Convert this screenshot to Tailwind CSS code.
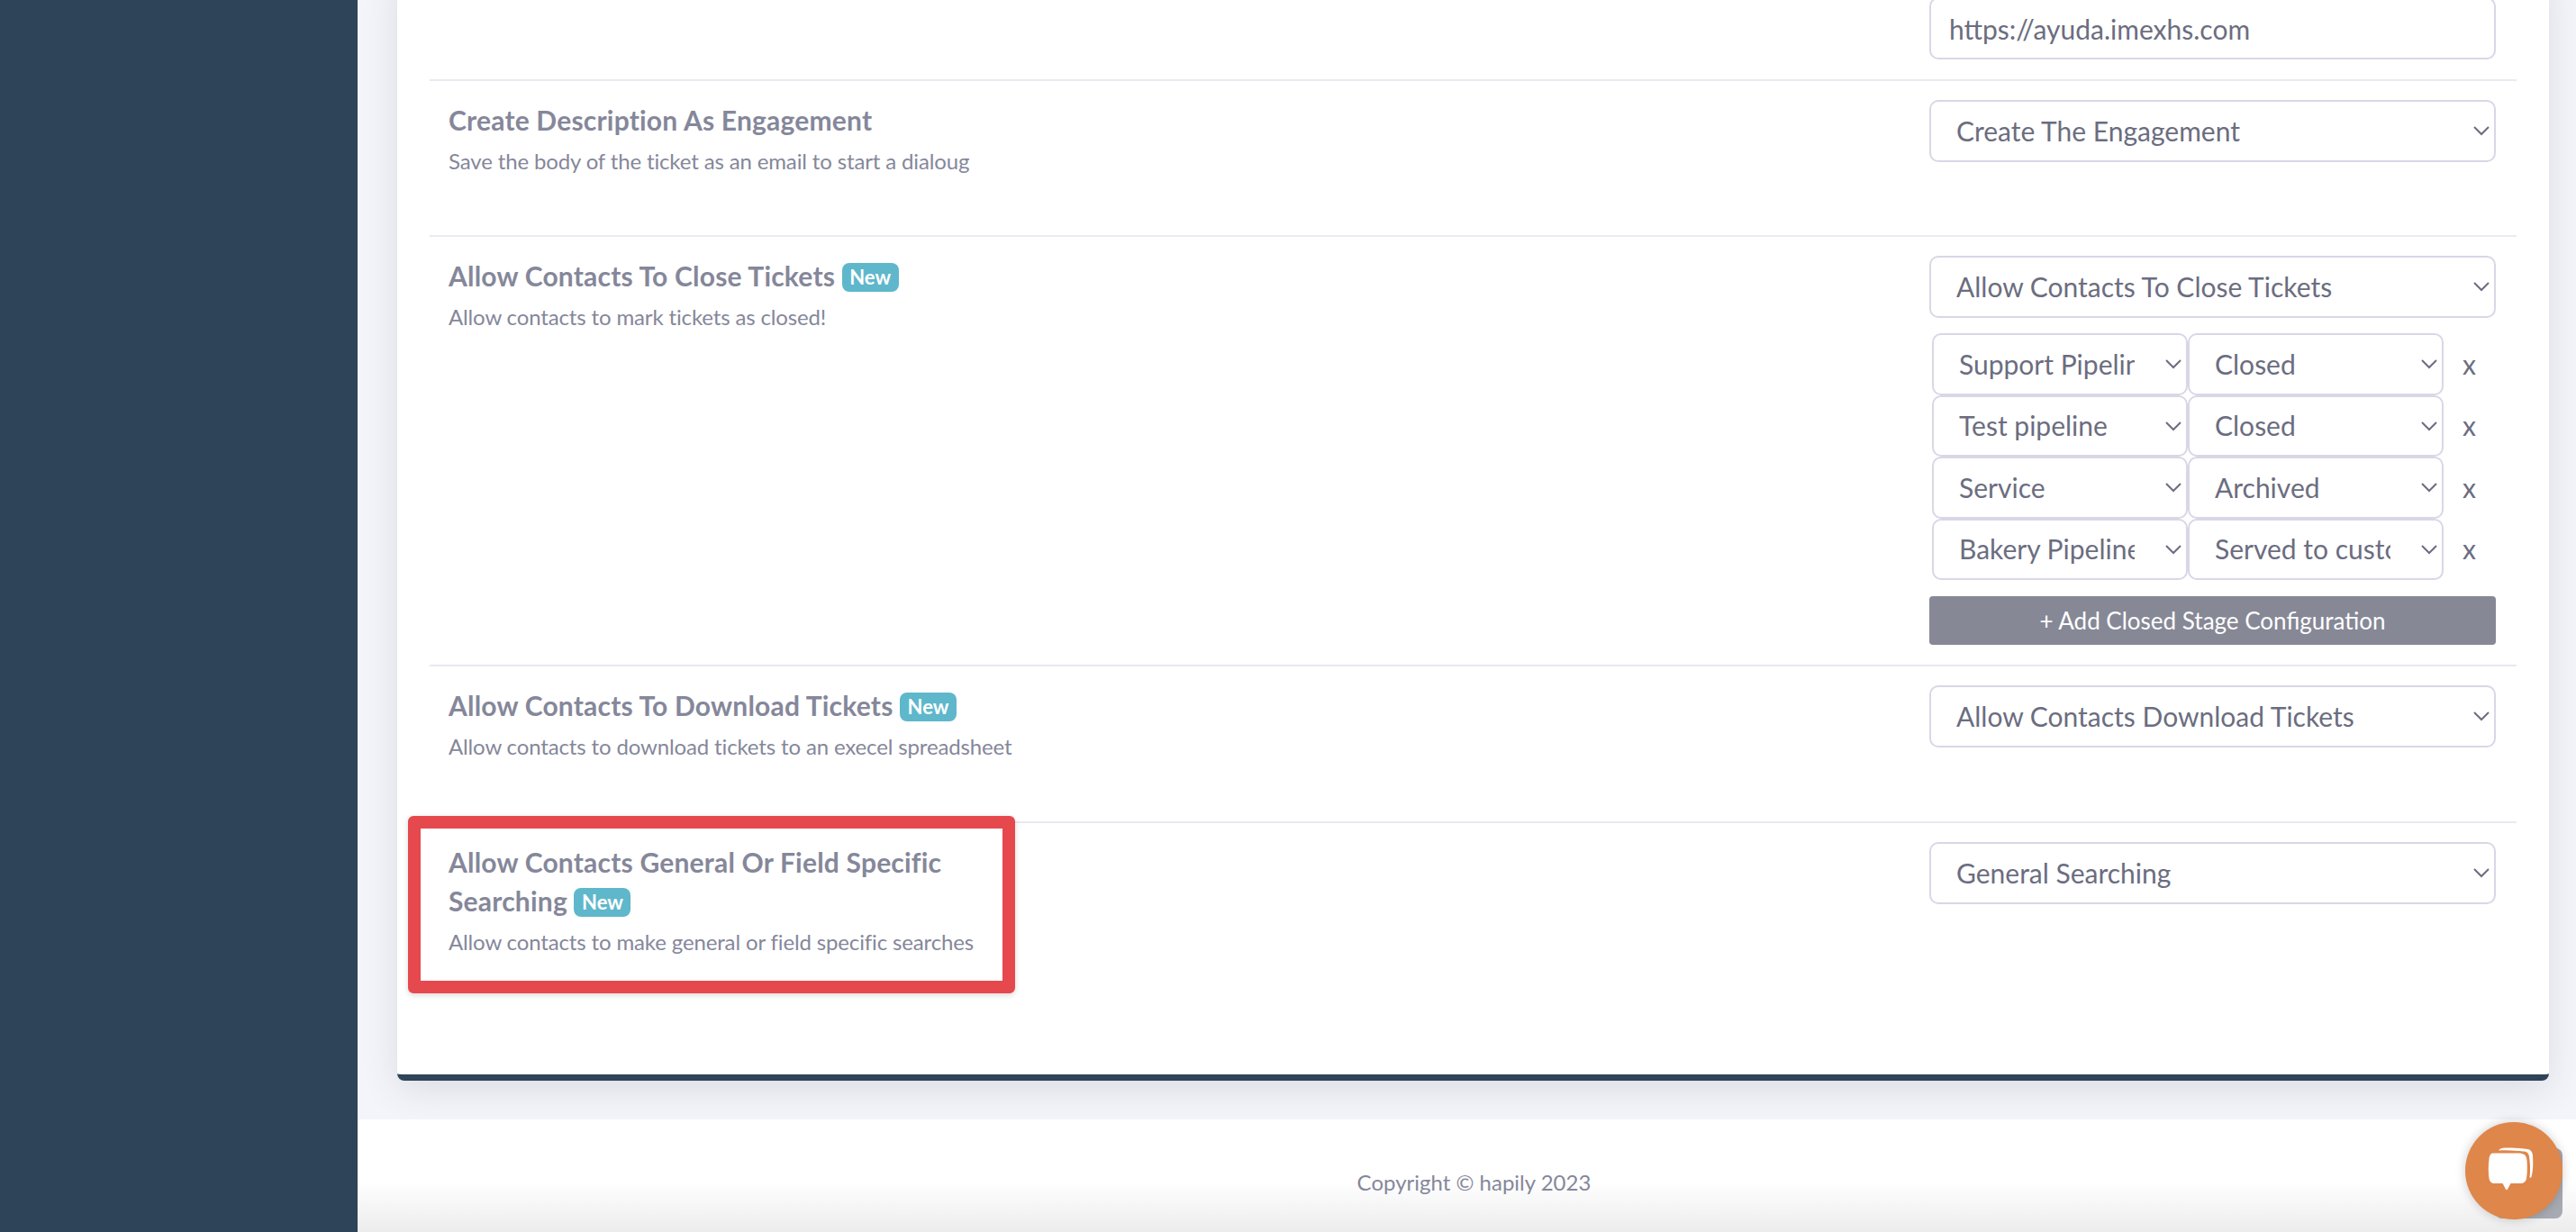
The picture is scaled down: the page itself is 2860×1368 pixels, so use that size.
<!DOCTYPE html>
<html lang="en">
<head>
<meta charset="utf-8">
<title>Settings</title>
<script src="https://cdn.jsdelivr.net/npm/@tailwindcss/browser@4"></script>
</head>
<body class="font-['Lato',sans-serif] overflow-hidden">
<div class="flex h-[1368px] w-[2860px] overflow-hidden">
  <aside class="w-[397px] shrink-0 bg-[#2d4459]"></aside>
  <main class="relative flex-1 flex flex-col min-w-0">
    <div class="h-[1243px] shrink-0 overflow-hidden bg-[#f4f5fa] flex flex-col justify-end pl-[44px] pr-[30px] pb-[43px]">
      <section class="shrink-0 bg-white rounded-[8px] border-b-[7px] border-[#2d4459] shadow-[0_10px_40px_rgba(60,60,80,0.13)] px-[36px] pt-[30px]">
        <!-- Help URL row (scrolled partly out of view) -->
        <div class="flex justify-between border-b-2 border-[#e9e9f1] pl-[21px] pr-[23px] pb-[22px]">
          <div></div>
          <input value="https://ayuda.imexhs.com" class="w-[629px] h-[69px] px-[20px] rounded-[10px] border-2 border-[#d9d7e6] text-[30px] text-[#6b6d80] bg-white outline-none">
        </div>

        <div class="flex justify-between border-b-2 border-[#e9e9f1] pl-[21px] pr-[23px] pt-[21px] h-[173px]">
          <div class="w-[640px]">
            <h3 class="mt-[1px] text-[30px] tracking-[0.2px] leading-[43px] font-bold text-[#85879a]">Create Description As Engagement</h3>
            <p class="text-[24px] tracking-[-0.14px] leading-[36px] mt-[6px] text-[#85879a]">Save the body of the ticket as an email to start a dialoug</p>
          </div>
          <div class="relative w-[629px] h-[69px]">
            <select class="appearance-none w-full h-full pl-[28px] pr-[40px] rounded-[10px] border-2 border-[#d9d7e6] text-[30px] text-[#6b6d80] bg-white"><option>Create The Engagement</option></select>
            <svg class="absolute right-[7px] top-[29px] pointer-events-none" width="18" height="11" viewBox="0 0 18 11" fill="none" stroke="#6b6d80" stroke-width="2"><path d="M1 1l8 8 8-8"/></svg>
          </div>
        </div>

        <div class="flex justify-between border-b-2 border-[#e9e9f1] pl-[21px] pr-[23px] pt-[21px] h-[477px]">
          <div class="w-[640px]">
            <h3 class="mt-[1px] text-[30px] tracking-[0.2px] leading-[43px] font-bold text-[#85879a]">Allow Contacts To Close Tickets <span class="inline-block align-[2px] h-[32px] w-[63px] rounded-[8px] bg-[#5fb7cb] text-white text-[22px] tracking-normal leading-[32px] text-center">New</span></h3>
            <p class="text-[24px] tracking-[-0.14px] leading-[36px] mt-[6px] text-[#85879a]">Allow contacts to mark tickets as closed!</p>
          </div>
          <div class="w-[629px] flex flex-col">
            <div class="relative h-[69px]">
              <select class="appearance-none w-full h-full pl-[28px] pr-[40px] rounded-[10px] border-2 border-[#d9d7e6] text-[30px] text-[#6b6d80] bg-white"><option>Allow Contacts To Close Tickets</option></select>
              <svg class="absolute right-[7px] top-[29px] pointer-events-none" width="18" height="11" viewBox="0 0 18 11" fill="none" stroke="#6b6d80" stroke-width="2"><path d="M1 1l8 8 8-8"/></svg>
            </div>
            <div class="mt-[17px] pl-[3px] flex flex-col">
              <div class="flex items-center h-[68.5px]">
                <div class="relative w-[284px] h-full"><select class="appearance-none w-full h-full pl-[28px] pr-[57px] rounded-[10px] border-2 border-[#d9d7e6] text-[30px] text-[#6b6d80] bg-white"><option>Support Pipeline</option></select><svg class="absolute right-[7px] top-[29px]" width="18" height="11" viewBox="0 0 18 11" fill="none" stroke="#6b6d80" stroke-width="2"><path d="M1 1l8 8 8-8"/></svg></div>
                <div class="relative w-[284px] h-full"><select class="appearance-none w-full h-full pl-[28px] pr-[57px] rounded-[10px] border-2 border-[#d9d7e6] text-[30px] text-[#6b6d80] bg-white"><option>Closed</option></select><svg class="absolute right-[7px] top-[29px]" width="18" height="11" viewBox="0 0 18 11" fill="none" stroke="#6b6d80" stroke-width="2"><path d="M1 1l8 8 8-8"/></svg></div>
                <span class="ml-[21px] text-[30px] text-[#6b6d80]">x</span>
              </div>
              <div class="flex items-center h-[68.5px]">
                <div class="relative w-[284px] h-full"><select class="appearance-none w-full h-full pl-[28px] pr-[57px] rounded-[10px] border-2 border-[#d9d7e6] text-[30px] text-[#6b6d80] bg-white"><option>Test pipeline</option></select><svg class="absolute right-[7px] top-[29px]" width="18" height="11" viewBox="0 0 18 11" fill="none" stroke="#6b6d80" stroke-width="2"><path d="M1 1l8 8 8-8"/></svg></div>
                <div class="relative w-[284px] h-full"><select class="appearance-none w-full h-full pl-[28px] pr-[57px] rounded-[10px] border-2 border-[#d9d7e6] text-[30px] text-[#6b6d80] bg-white"><option>Closed</option></select><svg class="absolute right-[7px] top-[29px]" width="18" height="11" viewBox="0 0 18 11" fill="none" stroke="#6b6d80" stroke-width="2"><path d="M1 1l8 8 8-8"/></svg></div>
                <span class="ml-[21px] text-[30px] text-[#6b6d80]">x</span>
              </div>
              <div class="flex items-center h-[68.5px]">
                <div class="relative w-[284px] h-full"><select class="appearance-none w-full h-full pl-[28px] pr-[57px] rounded-[10px] border-2 border-[#d9d7e6] text-[30px] text-[#6b6d80] bg-white"><option>Service</option></select><svg class="absolute right-[7px] top-[29px]" width="18" height="11" viewBox="0 0 18 11" fill="none" stroke="#6b6d80" stroke-width="2"><path d="M1 1l8 8 8-8"/></svg></div>
                <div class="relative w-[284px] h-full"><select class="appearance-none w-full h-full pl-[28px] pr-[57px] rounded-[10px] border-2 border-[#d9d7e6] text-[30px] text-[#6b6d80] bg-white"><option>Archived</option></select><svg class="absolute right-[7px] top-[29px]" width="18" height="11" viewBox="0 0 18 11" fill="none" stroke="#6b6d80" stroke-width="2"><path d="M1 1l8 8 8-8"/></svg></div>
                <span class="ml-[21px] text-[30px] text-[#6b6d80]">x</span>
              </div>
              <div class="flex items-center h-[68.5px]">
                <div class="relative w-[284px] h-full"><select class="appearance-none w-full h-full pl-[28px] pr-[57px] rounded-[10px] border-2 border-[#d9d7e6] text-[30px] text-[#6b6d80] bg-white"><option>Bakery Pipeline</option></select><svg class="absolute right-[7px] top-[29px]" width="18" height="11" viewBox="0 0 18 11" fill="none" stroke="#6b6d80" stroke-width="2"><path d="M1 1l8 8 8-8"/></svg></div>
                <div class="relative w-[284px] h-full"><select class="appearance-none w-full h-full pl-[28px] pr-[57px] rounded-[10px] border-2 border-[#d9d7e6] text-[30px] text-[#6b6d80] bg-white"><option>Served to customer</option></select><svg class="absolute right-[7px] top-[29px]" width="18" height="11" viewBox="0 0 18 11" fill="none" stroke="#6b6d80" stroke-width="2"><path d="M1 1l8 8 8-8"/></svg></div>
                <span class="ml-[21px] text-[30px] text-[#6b6d80]">x</span>
              </div>
            </div>
            <button class="mt-[18px] h-[54px] rounded-[4px] bg-[#868896] text-white text-[26px]">+ Add Closed Stage Configuration</button>
          </div>
        </div>

        <div class="flex justify-between border-b-2 border-[#e9e9f1] pl-[21px] pr-[23px] pt-[21px] h-[174px]">
          <div class="w-[640px]">
            <h3 class="mt-[1px] text-[30px] tracking-[0.2px] leading-[43px] font-bold text-[#85879a]">Allow Contacts To Download Tickets <span class="inline-block align-[2px] h-[32px] w-[63px] rounded-[8px] bg-[#5fb7cb] text-white text-[22px] tracking-normal leading-[32px] text-center">New</span></h3>
            <p class="text-[24px] tracking-[-0.14px] leading-[36px] mt-[6px] text-[#85879a]">Allow contacts to download tickets to an execel spreadsheet</p>
          </div>
          <div class="relative w-[629px] h-[69px]">
            <select class="appearance-none w-full h-full pl-[28px] pr-[40px] rounded-[10px] border-2 border-[#d9d7e6] text-[30px] text-[#6b6d80] bg-white"><option>Allow Contacts Download Tickets</option></select>
            <svg class="absolute right-[7px] top-[29px] pointer-events-none" width="18" height="11" viewBox="0 0 18 11" fill="none" stroke="#6b6d80" stroke-width="2"><path d="M1 1l8 8 8-8"/></svg>
          </div>
        </div>

        <div class="flex justify-between pl-[21px] pr-[23px] pt-[21px] h-[279px]">
          <div class="relative w-[640px] self-start">
            <h3 class="mt-[1px] text-[30px] tracking-[0.2px] leading-[43px] font-bold text-[#85879a] max-w-[600px]">Allow Contacts General Or Field Specific Searching <span class="inline-block align-[2px] h-[32px] w-[63px] rounded-[8px] bg-[#5fb7cb] text-white text-[22px] tracking-normal leading-[32px] text-center">New</span></h3>
            <p class="text-[24px] tracking-[-0.14px] leading-[36px] mt-[6px] text-[#85879a]">Allow contacts to make general or field specific searches</p>
            <div class="absolute left-[-45px] top-[-29px] w-[674px] h-[197px] rounded-[6px] border-[14px] border-[#e5494e] shadow-[0_2px_6px_rgba(0,0,0,0.15)]"></div>
          </div>
          <div class="relative w-[629px] h-[69px]">
            <select class="appearance-none w-full h-full pl-[28px] pr-[40px] rounded-[10px] border-2 border-[#d9d7e6] text-[30px] text-[#6b6d80] bg-white"><option>General Searching</option></select>
            <svg class="absolute right-[7px] top-[29px] pointer-events-none" width="18" height="11" viewBox="0 0 18 11" fill="none" stroke="#6b6d80" stroke-width="2"><path d="M1 1l8 8 8-8"/></svg>
          </div>
        </div>
      </section>
    </div>
    <footer class="flex-1 bg-linear-to-b from-white from-[55%] to-[#ececec] flex justify-center pt-[55px] pl-[16px]">
      <p class="text-[24px] leading-[30px] text-[#85879a]">Copyright © hapily 2023</p>
    </footer>
    <div class="absolute left-[2373px] top-[1275px] w-[75px] h-[78px] rounded-[8px] bg-[#a8aab3]"></div>
    <div class="absolute left-[2340px] top-[1246px] w-[108px] h-[108px] rounded-full bg-[#df864a] shadow-[0_0_12px_rgba(0,0,0,0.2)] flex items-center justify-center">
      <svg width="60" height="56" viewBox="0 0 60 56" fill="#fff">
        <path d="M7 8.500h28c6 0 9 2 9.500 8 .5 7 .5 14-.5 20-.5 3.500-3 5.500-7 5.500H26.500l-3.500 6.500q-1 1.500-2 0L17.500 42H9c-4 0-6-2-6.500-5.500C1.500 30 1.500 22 2.500 15 3 11 4 8.500 7 8.500z"/>
        <path d="M13 5.500C14 3.500 17 2.500 20 2.500c9 0 18 .5 25 1.500 4 .5 5.500 3 6 7 .5 8 .5 16-1.500 24l-2 1c1-8 .5-17-.5-24-.5-3.500-2.500-5.500-7-5.500-9-1-19-1.500-27-1z"/>
      </svg>
    </div>
  </main>
</div>
</body>
</html>
